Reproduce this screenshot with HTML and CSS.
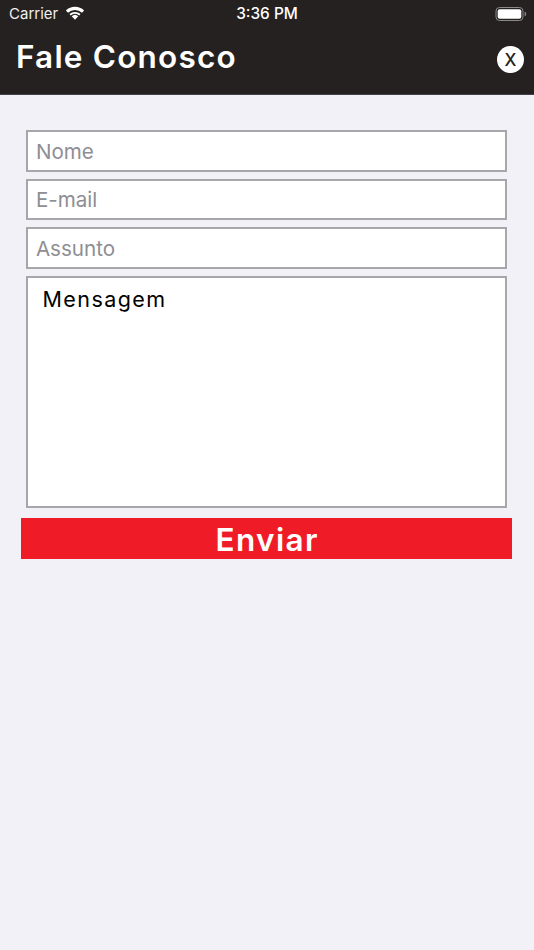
FILE: index.html
```html
<!DOCTYPE html>
<html lang="pt">
<head>
<meta charset="utf-8">
<title>Fale Conosco</title>
<link rel="stylesheet" href="styles.css">
</head>
<body>
<header class="header">
  <div class="status">
    <div class="status-left">
      <span>Carrier</span>
      <svg class="wifi" viewBox="0 0 20 14" width="20" height="14"><path d="M10 13.8 6.7 10.3a4.8 4.8 0 0 1 6.6 0Z" fill="#fff"/><path d="M4.5 8.1a8.1 8.1 0 0 1 11 0L14.3 9.4a6.3 6.3 0 0 0-8.6 0Z" fill="#fff"/><path d="M.9 4.5a13.2 13.2 0 0 1 18.2 0L17 6.8a10.1 10.1 0 0 0-14 0Z" fill="#fff"/></svg>
    </div>
    <span class="time">3:36 PM</span>
    <svg class="battery" viewBox="0 0 32 16" width="32" height="16"><rect x="1" y="1.5" width="27" height="13" rx="3.5" fill="none" stroke="#8a8a8a" stroke-width="1"/><rect x="2.7" y="3.2" width="23.6" height="9.6" rx="2" fill="#fff"/><path d="M29.6 5.8c1 .3 1.6 1.1 1.6 2.2s-.6 1.9-1.6 2.2Z" fill="#8a8a8a"/></svg>
  </div>
  <div class="title-row">
    <h1 class="title">Fale Conosco</h1>
    <button class="close" type="button">X</button>
  </div>
</header>
<main class="form">
  <input class="field" type="text" placeholder="Nome">
  <input class="field" type="text" placeholder="E-mail">
  <input class="field" type="text" placeholder="Assunto">
  <div class="message">Mensagem</div>
  <button class="send" type="button">Enviar</button>
</main>
</body>
</html>
```
FILE: styles.css
```css
* { box-sizing: border-box; }
html, body { margin: 0; height: 100%; }
body { width: 534px; height: 950px; background: #f1f1f7; font-family: Inter, "Liberation Sans", sans-serif; overflow: hidden; }
.header { height: 95px; background: #242120; color: #fff; border-bottom: 1px solid #45434a; }
.status { position: relative; height: 27px; padding: 0 7px 0 9px; display: flex; align-items: center; justify-content: space-between; font-size: 15px; }
.status-left { display: flex; align-items: center; gap: 7px; color: #f0f0f0; }
.wifi { margin-top: -1px; }
.time { position: absolute; left: 0; right: 0; text-align: center; font-weight: 500; font-size: 15.4px; }
.title-row { height: 67px; padding: 0 10px 9px 16px; display: flex; align-items: center; justify-content: space-between; }
.title { margin: 0; font-size: 31.5px; font-weight: 600; letter-spacing: 1.2px; }
.close { width: 27px; height: 27px; margin-top: 7px; padding: 0; border: 0; border-radius: 50%; background: #fff; color: #242120; font: 500 17px Inter, sans-serif; display: flex; align-items: center; justify-content: center; }
.form { padding: 35px 21px 0; display: flex; flex-direction: column; align-items: flex-start; gap: 7.2px; }
.field { width: 481px; height: 41.5px; margin-left: 5.4px; padding: 1px 7.5px 0; border: 2px solid #a6a6ab; background: #fff; font: 400 20.6px Inter, sans-serif; outline: 0; border-radius: 0; }
.field::placeholder { color: #8e8e93; opacity: 1; }
.message { width: 481px; height: 231.5px; margin-left: 5.4px; padding: 8px 14px; border: 2px solid #a6a6ab; background: #fff; color: #000; font-size: 21.5px; letter-spacing: 1.45px; line-height: 26px; }
.send { width: 491px; height: 41.5px; margin-top: 3px; padding: 1px 0 0 1.4px; border: 0; border-radius: 0; background: #ef1c27; color: #fff; font: 600 31.5px Inter, sans-serif; letter-spacing: 1.4px; }
```
